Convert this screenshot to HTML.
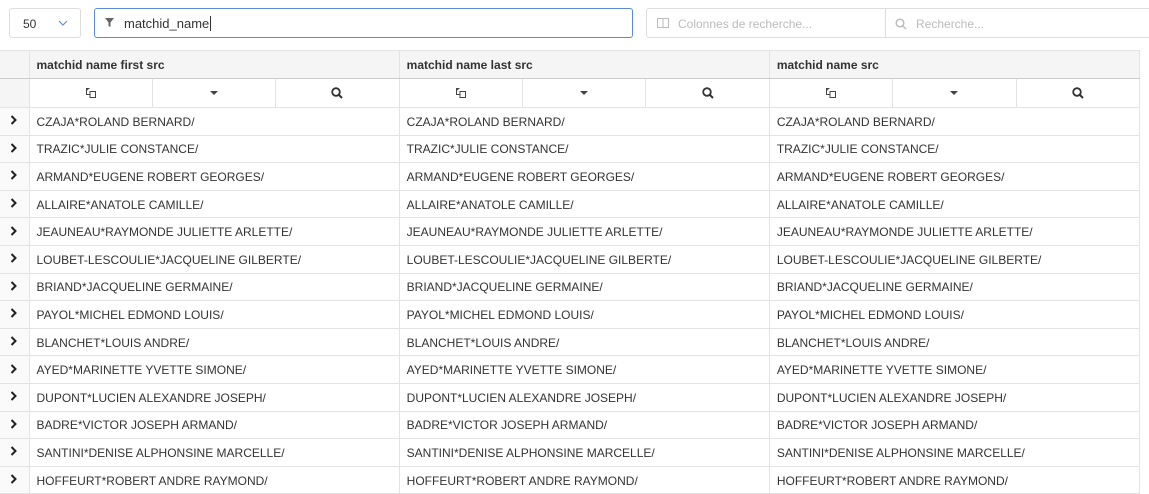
<!DOCTYPE html><html><head><meta charset="utf-8"><style>
*{box-sizing:border-box;margin:0;padding:0}
body{width:1149px;height:492px;overflow:hidden;background:#fff;font-family:"Liberation Sans",sans-serif;font-size:12px;color:#333;position:relative}
.box{position:absolute;top:8px;height:30px;border:1px solid #ddd;border-radius:3px;background:#fff}
.ph{color:#bbb;font-size:12px;position:absolute;top:8px}
table{position:absolute;top:50px;left:0;border-collapse:collapse;table-layout:fixed;width:1140px}
td,th{border:1px solid #e3e3e3;height:27.6px;padding:0 7px;white-space:nowrap;overflow:hidden;text-align:left}
tbody td{padding-top:1px}
th{background:#f5f5f5;font-weight:bold;height:28px;border-bottom:1px solid #ccc}
td.g{border:none;border-bottom:1px solid #e3e3e3;background:#fafafa;padding:0;text-align:center}
.f td{height:29px;padding:0;background:#fff}
.sub{display:flex;height:28px}
.sub div{flex:1;border-right:1px solid #e3e3e3;display:flex;align-items:center;justify-content:center}
.sub div:last-child{border-right:none}
</style></head><body>
<div class="box" style="left:9px;width:72px"><span style="position:absolute;left:13px;top:8px">50</span><svg style="position:absolute;left:48px;top:11px" width="10" height="7"><path d="M1 1l4 4 4-4" fill="none" stroke="#6a8fc8" stroke-width="1.2"/></svg></div>
<div class="box" style="left:94px;width:539px;border-color:#5b8bd6"><svg style="position:absolute;left:10px;top:9px" width="10" height="10"><path d="M0 0h9L5.5 4.5V9L3.5 8V4.5z" fill="#666"/></svg><span style="position:absolute;left:29px;top:7px;font-size:13px">matchid_name<span style="border-left:1px solid #333;margin-left:1px"></span></span></div>
<div class="box" style="left:646px;width:240px;border-radius:3px 0 0 3px"><svg style="position:absolute;left:10px;top:9px" width="12" height="10"><rect x=".5" y=".5" width="11" height="9" fill="none" stroke="#bbb"/><path d="M6 0v10" stroke="#bbb"/></svg><span class="ph" style="left:31px">Colonnes de recherche...</span></div>
<div class="box" style="left:885px;width:270px;border-radius:0"><svg style="position:absolute;left:9px;top:9px" width="12" height="12"><circle cx="5" cy="5" r="3.8" fill="none" stroke="#bbb" stroke-width="1.5"/><path d="M8 8l3 3" stroke="#bbb" stroke-width="1.5"/></svg><span class="ph" style="left:30px">Recherche...</span></div>
<table>
<colgroup><col style="width:29px"><col style="width:370px"><col style="width:370px"><col style="width:370px"></colgroup>
<tr><th style="background:#f5f5f5;border-left:none"></th><th>matchid name first src</th><th>matchid name last src</th><th>matchid name src</th></tr>
<tr class="f"><td class="g" style="background:#f5f5f5"></td>
<td><div class="sub"><div><svg width="12" height="12"><path d="M4.5 1.5h-3v6h3M5 4.5h5.5v6H5z" fill="none" stroke="#444"/><path d="M1.5 3.5l2-2" stroke="#444"/></svg></div><div><svg width="8" height="5"><path d="M0 0h8L4 4z" fill="#444"/></svg></div><div><svg width="12" height="12"><circle cx="5" cy="5" r="3.8" fill="none" stroke="#333" stroke-width="1.8"/><path d="M8 8l3 3" stroke="#333" stroke-width="2"/></svg></div></div></td>
<td><div class="sub"><div><svg width="12" height="12"><path d="M4.5 1.5h-3v6h3M5 4.5h5.5v6H5z" fill="none" stroke="#444"/><path d="M1.5 3.5l2-2" stroke="#444"/></svg></div><div><svg width="8" height="5"><path d="M0 0h8L4 4z" fill="#444"/></svg></div><div><svg width="12" height="12"><circle cx="5" cy="5" r="3.8" fill="none" stroke="#333" stroke-width="1.8"/><path d="M8 8l3 3" stroke="#333" stroke-width="2"/></svg></div></div></td>
<td><div class="sub"><div><svg width="12" height="12"><path d="M4.5 1.5h-3v6h3M5 4.5h5.5v6H5z" fill="none" stroke="#444"/><path d="M1.5 3.5l2-2" stroke="#444"/></svg></div><div><svg width="8" height="5"><path d="M0 0h8L4 4z" fill="#444"/></svg></div><div><svg width="12" height="12"><circle cx="5" cy="5" r="3.8" fill="none" stroke="#333" stroke-width="1.8"/><path d="M8 8l3 3" stroke="#333" stroke-width="2"/></svg></div></div></td></tr>
<tbody id="b"></tbody>
</table>
<script>
var n=["CZAJA*ROLAND BERNARD/","TRAZIC*JULIE CONSTANCE/","ARMAND*EUGENE ROBERT GEORGES/","ALLAIRE*ANATOLE CAMILLE/","JEAUNEAU*RAYMONDE JULIETTE ARLETTE/","LOUBET-LESCOULIE*JACQUELINE GILBERTE/","BRIAND*JACQUELINE GERMAINE/","PAYOL*MICHEL EDMOND LOUIS/","BLANCHET*LOUIS ANDRE/","AYED*MARINETTE YVETTE SIMONE/","DUPONT*LUCIEN ALEXANDRE JOSEPH/","BADRE*VICTOR JOSEPH ARMAND/","SANTINI*DENISE ALPHONSINE MARCELLE/","HOFFEURT*ROBERT ANDRE RAYMOND/"];
var h="";n.forEach(function(s){h+='<tr><td class="g"><svg width="8" height="10"><path d="M1.5 1l4 4-4 4" fill="none" stroke="#222" stroke-width="2"/></svg></td><td>'+s+'</td><td>'+s+'</td><td>'+s+'</td></tr>'});
document.getElementById("b").innerHTML=h;
</script>
</body></html>
